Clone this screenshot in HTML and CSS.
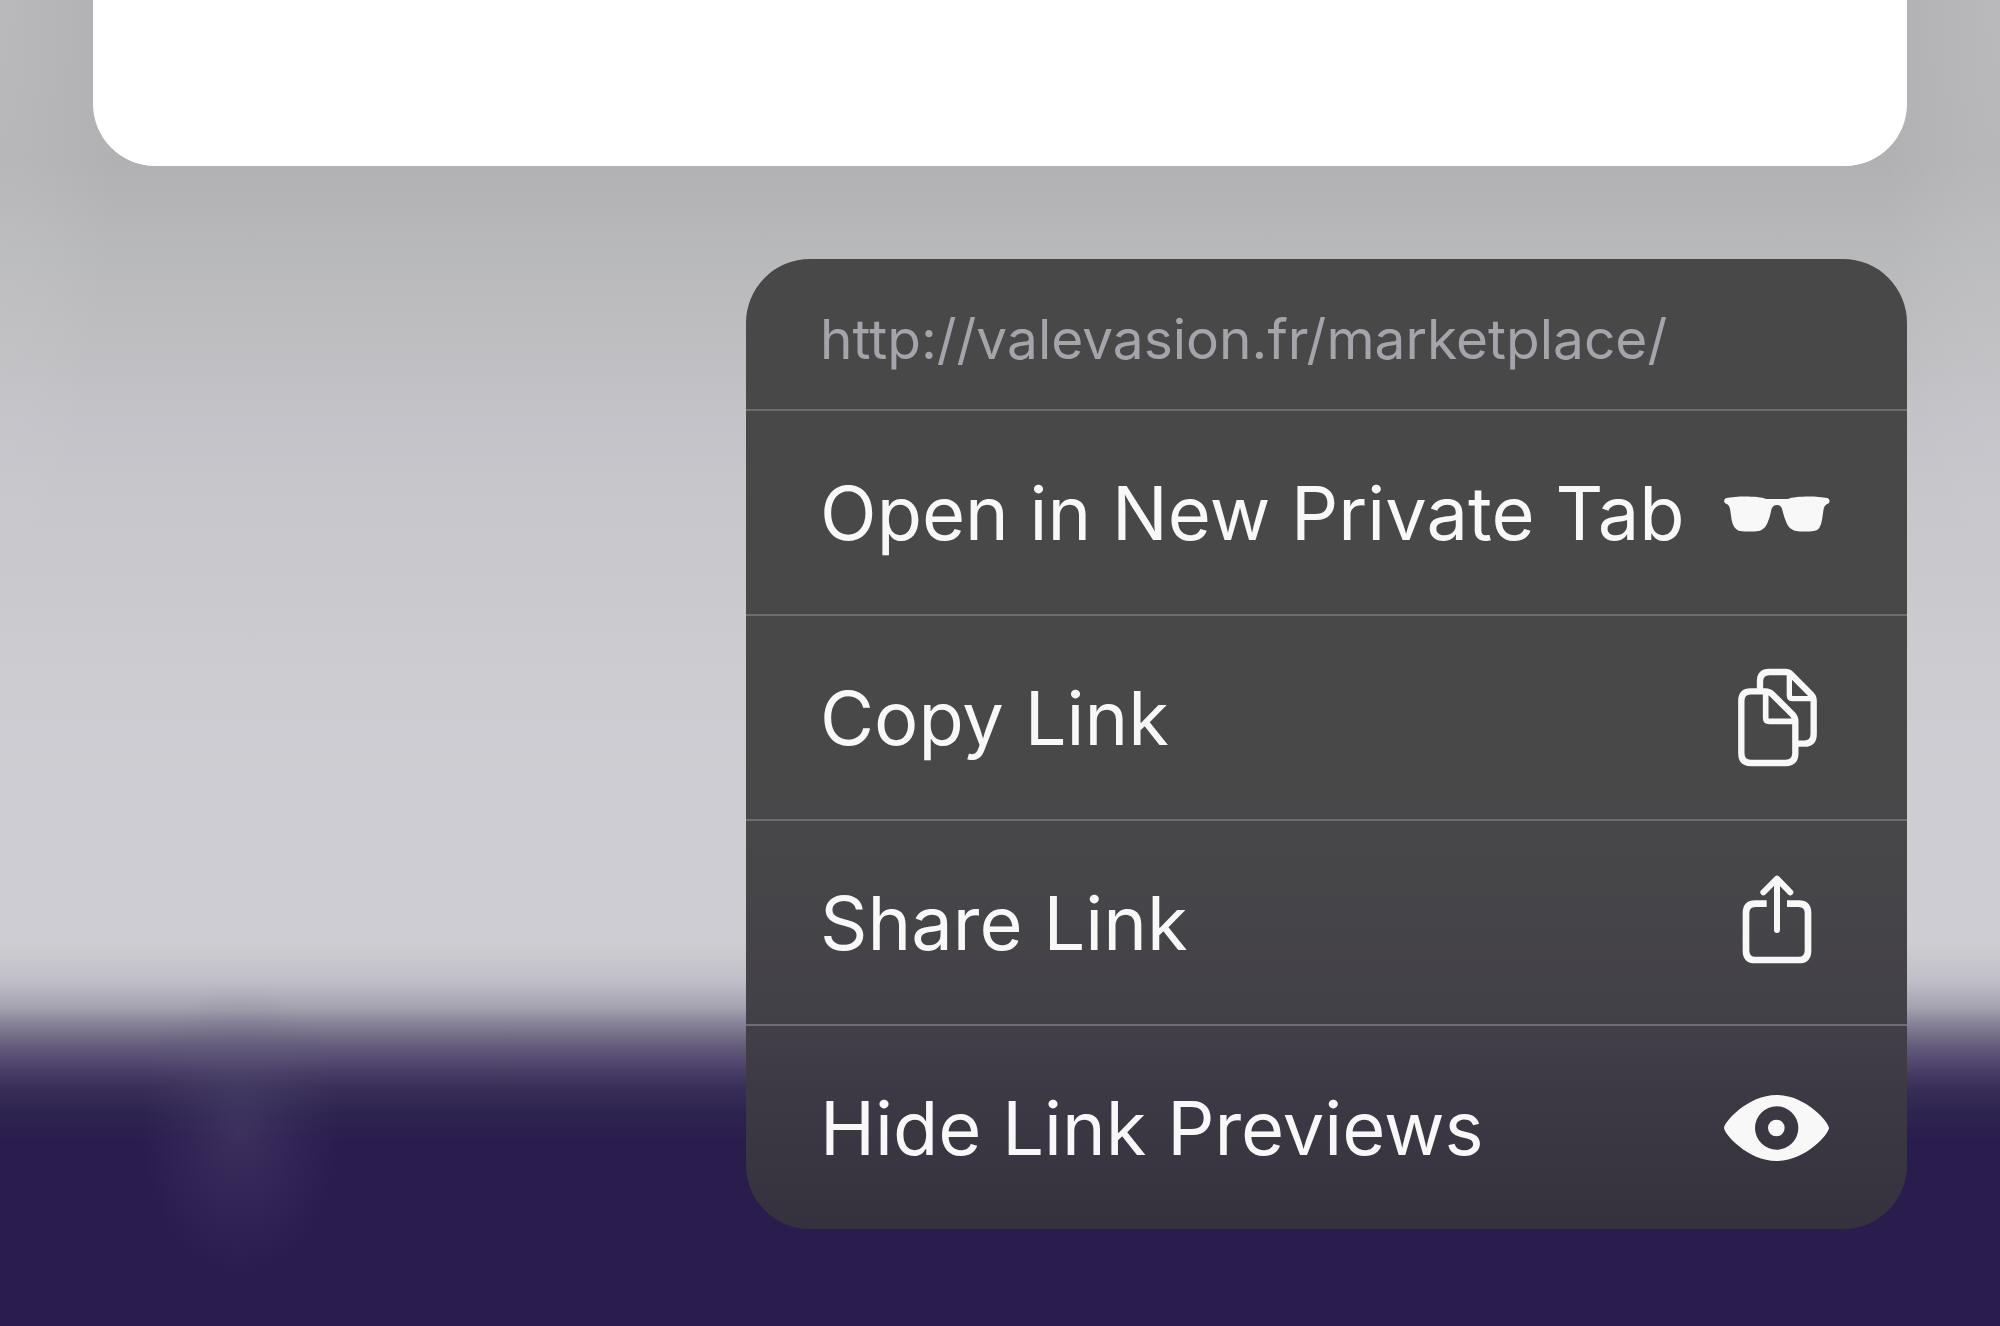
FILE: index.html
```
<!DOCTYPE html>
<html lang="en">
<head>
<meta charset="utf-8">
<meta name="viewport" content="width=device-width, initial-scale=1">
<title>Link preview menu</title>
<link rel="stylesheet" href="styles.css">
</head>
<body>
<main class="screen">
  <section class="preview" aria-label="Page preview"></section>
  <section class="menu" aria-label="Link actions">
    <p class="menu-url">http://valevasion.fr/marketplace/</p>
    <button class="menu-item" type="button">
      <span>Open in New Private Tab</span>
      <svg class="icon" viewBox="69 -33 324 324" aria-hidden="true">
        <path fill="currentColor" d="M79 84C110 78 172 77 200 87H262C290 77 352 78 382 84Q389 86 389 94Q388 101 380 103Q373 107 371 116L366 150Q361 180 345 182Q315 187 284 182Q268 178 260 160Q252 142 248 124Q245 105 231 105Q216 105 213 124Q209 145 202 160Q194 178 180 182Q148 187 116 182Q100 176 95 150L90 116Q88 107 82 103Q73 101 72 94Q72 86 79 84Z"/>
      </svg>
    </button>
    <button class="menu-item" type="button">
      <span>Copy Link</span>
      <svg class="icon" viewBox="39 42 324 324" aria-hidden="true">
        <g fill="none" stroke="currentColor" stroke-width="19" stroke-linejoin="round">
          <path d="M150 118V94Q150 66 178 66H226Q236 66 243 73L304 134Q311 141 311 152V252Q311 281 283 281H264"/>
          <path d="M238 70V136Q238 146 248 146H309" stroke-width="16"/>
          <path d="M122 124H166Q178 124 186 132L247 193Q256 202 256 214V310Q256 339 227 339H122Q94 339 94 310V152Q94 124 122 124Z"/>
          <path d="M167 128V203Q167 214 178 214H254" stroke-width="17"/>
        </g>
      </svg>
    </button>
    <button class="menu-item" type="button">
      <span>Share Link</span>
      <svg class="icon" viewBox="39 27 324 324" aria-hidden="true">
        <g fill="none" stroke="currentColor" stroke-width="20">
          <path d="M170 131H136Q108 131 108 159V272Q108 300 136 300H266Q294 300 294 272V159Q294 131 266 131H231"/>
          <path d="M201 210V57M160 97L201 56L241 97" stroke-width="18" stroke-linecap="round" stroke-linejoin="round"/>
        </g>
      </svg>
    </button>
    <button class="menu-item" type="button">
      <span>Hide Link Previews</span>
      <svg class="icon" viewBox="69 -21 324 324" aria-hidden="true">
        <path fill="currentColor" fill-rule="evenodd" d="M72 141C72 124 143 42 230 42C317 42 387 124 387 141C387 158 317 240 230 240C143 240 72 158 72 141ZM230 76A65 65 0 1 0 230 206A65 65 0 1 0 230 76Z"/>
        <circle cx="229" cy="141" r="25" fill="currentColor"/>
      </svg>
    </button>
  </section>
</main>
</body>
</html>
```
FILE: styles.css
```
* {
  box-sizing: border-box;
}

body {
  margin: 0;
  font-family: Inter, "Liberation Sans", sans-serif;
}

/* Blurred page behind the sheet: the sheet's wide shadow, then the dark footer band. */
.screen {
  min-height: 100vh;
  display: flex;
  flex-direction: column;
  align-items: flex-end;
  gap: 93px;
  padding: 0 93px 98px;
  background:
    radial-gradient(ellipse 6% 45% at 0 0, rgba(255, 255, 255, 0.11), transparent),
    radial-gradient(ellipse 6% 45% at 100% 0, rgba(255, 255, 255, 0.11), transparent),
    radial-gradient(ellipse 5% 11% at 12% 85%, rgba(96, 88, 128, 0.32), rgba(96, 88, 128, 0.13) 55%, transparent),
    linear-gradient(#b1b1b3 12%, #b4b4b6 15%, #b8b9ba 19%, #bcbcbe 23%, #c0c0c4 28%, #c4c3c9 32%, #c8c7cc 38%, #cac9ce 45%, #cdccd1 51%, #cecdd3 58%, #cecdd3 71%, #cac9ce 72%, #bfbdc7 74%, #a3a1ad 76%, #8a859b 77%, #746e87 78%, #625979 79%, #54496e 80%, #443a62 81%, #382e58 82%, #2d2350 84%, #2b1c4e 86%);
}

.preview {
  width: 100%;
  height: 166px;
  border-radius: 0 0 62px 62px;
  background: #fff;
}

.menu {
  width: 64%;
  border-radius: 64px;
  overflow: hidden;
  background: linear-gradient(#484849 55%, #434148 77%, #3e3a45 85%, #35313d);
}

.menu-url {
  height: 150px;
  margin: 0;
  padding: 10px 74px 0;
  font-size: 55px;
  line-height: 140px;
  color: #a5a4aa;
  white-space: nowrap;
}

.menu-item {
  display: flex;
  align-items: center;
  justify-content: space-between;
  width: 100%;
  height: 205px;
  padding: 0 76px 0 74px;
  border: 0;
  border-top: 2px solid #6e6d72;
  background: transparent;
  color: #f8f8f8;
  font: inherit;
  font-size: 74px;
  line-height: 92px;
  text-align: left;
  white-space: nowrap;
}

.icon {
  flex: none;
  width: 108px;
  height: 108px;
}
```
